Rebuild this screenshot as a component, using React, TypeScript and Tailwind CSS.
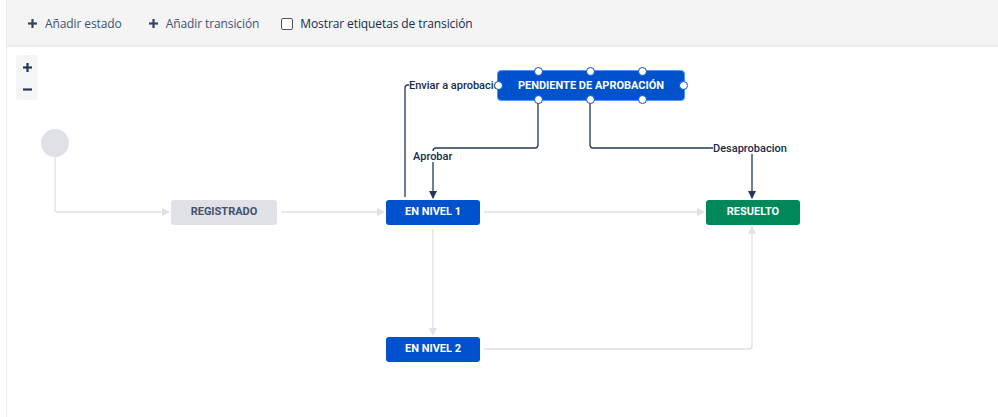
import React from 'react'

const ui = { fontFamily: '"Open Sans", "Noto Sans", sans-serif' }
const rb = { fontFamily: 'Roboto, "Liberation Sans", sans-serif' }

interface NodeProps {
  label: string
  x: number
  y: number
  w: number
  h: number
  className: string
}

function StatusNode({ label, x, y, w, h, className }: NodeProps) {
  return (
    <div
      className={`absolute flex items-center justify-center rounded-[3px] text-[11px] font-bold ${className}`}
      style={{ left: x, top: y, width: w, height: h, ...rb }}
    >
      {label}
    </div>
  )
}

function Handle({ x, y }: { x: number; y: number }) {
  return (
    <div
      className="absolute w-[9px] h-[9px] rounded-full bg-white border-[1.5px] border-[#0052cc]"
      style={{ left: x - 4.5, top: y - 4.5 }}
    />
  )
}

function EdgeLabel({ text, x, y }: { text: string; x: number; y: number }) {
  return (
    <div
      className="absolute text-[11px] font-medium leading-none text-[#172b4d] bg-white whitespace-nowrap"
      style={{ left: x, top: y, ...rb }}
    >
      {text}
    </div>
  )
}

function PlusIcon({ size = 9, minus = false }: { size?: number; minus?: boolean }) {
  const m = size / 2
  return (
    <svg width={size} height={size} viewBox={`0 0 ${size} ${size}`} className="shrink-0">
      <path d={`M0,${m} L${size},${m}`} stroke="currentColor" strokeWidth="2.2" />
      {!minus && <path d={`M${m},0 L${m},${size}`} stroke="currentColor" strokeWidth="2.2" />}
    </svg>
  )
}

function ToolButton({ label }: { label: string }) {
  return (
    <button className="flex items-center gap-[8px] text-[#42526e] text-[12px] tracking-[-0.1px]">
      <span className="text-[#344563] flex"><PlusIcon /></span>
      {label}
    </button>
  )
}

export default function App() {
  const light = '#dfe1e6'
  const dark = '#253858'

  return (
    <div className="w-[998px] h-[417px] bg-white overflow-hidden pl-[6px]">
      <div className="h-full border-l border-[#ebecf0] flex flex-col">
        <div className="h-[47px] bg-[#f4f4f4] border-b-2 border-[#ebebeb] flex items-center gap-[27px] pl-[21px] pt-[2px]" style={ui}>
          <ToolButton label="Añadir estado" />
          <ToolButton label="Añadir transición" />
          <label className="flex items-center gap-[7px] text-[12px] tracking-[-0.1px] text-[#172b4d] -ml-[5px]">
            <span className="w-[12px] h-[12px] border border-[#555] rounded-[2px] bg-white" />
            Mostrar etiquetas de transición
          </label>
        </div>

        <div className="relative flex-1">
          <div className="absolute left-[9px] top-[8px] w-[22px] h-[45px] bg-[#f4f5f7] rounded-[3px] flex flex-col items-center text-[#253858] pt-[1px]">
            <span className="h-[22px] flex items-center"><PlusIcon size={9} /></span>
            <span className="h-[22px] flex items-center"><PlusIcon size={9} minus /></span>
          </div>

          {/* edges, canvas coords = page coords, svg shifted back by canvas origin */}
          <svg className="absolute left-[-7px] top-[-47px]" width="998" height="417">
            <defs>
              <marker id="al" markerWidth="8" markerHeight="8" refX="7" refY="4" orient="auto" markerUnits="userSpaceOnUse">
                <path d="M0,0 L8,4 L0,8 z" fill={light} />
              </marker>
              <marker id="ad" markerWidth="8" markerHeight="8" refX="7" refY="4" orient="auto" markerUnits="userSpaceOnUse">
                <path d="M0,0 L8,4 L0,8 z" fill={dark} />
              </marker>
            </defs>
            <g fill="none" strokeWidth="1.3">
              <path d="M55,157 L55,209 Q55,212 58,212 L169,212" stroke={light} markerEnd="url(#al)" />
              <path d="M281,212 L384,212" stroke={light} markerEnd="url(#al)" />
              <path d="M484,212 L704,212" stroke={light} markerEnd="url(#al)" />
              <path d="M433,229 L433,335" stroke={light} markerEnd="url(#al)" />
              <path d="M484,349 L749,349 Q752,349 752,346 L752,227" stroke={light} markerEnd="url(#al)" />
              <path d="M405,197 L405,88 Q405,85 408,85 L496,85" stroke={dark} />
              <path d="M538,100 L538,145 Q538,148 535,148 L436,148 Q433,148 433,151 L433,198" stroke={dark} markerEnd="url(#ad)" />
              <path d="M590,100 L590,145 Q590,148 593,148 L749,148 Q752,148 752,151 L752,198" stroke={dark} markerEnd="url(#ad)" />
            </g>
            <circle cx="55" cy="143" r="14" fill="#dfe1e6" />
          </svg>

          <StatusNode label="REGISTRADO" x={164} y={153} w={106} h={25} className="bg-[#dfe1e6] text-[#42526e]" />
          <StatusNode label="EN NIVEL 1" x={379} y={153} w={94} h={25} className="bg-[#0052cc] text-white" />
          <StatusNode label="RESUELTO" x={699} y={153} w={94} h={25} className="bg-[#00875a] text-white" />
          <StatusNode label="EN NIVEL 2" x={379} y={290} w={94} h={25} className="bg-[#0052cc] text-white" />

          <EdgeLabel text="Enviar a aprobacio" x={402} y={33} />
          <EdgeLabel text="Aprobar" x={406} y={104} />
          <EdgeLabel text="Desaprobacion" x={706} y={96} />

          <div className="absolute left-[490px] top-[23px] w-[188px] h-[31px] rounded-[4px] border-[1.5px] border-[#4c9aff] bg-[#0052cc] flex items-center justify-center">
            <span className="text-[11px] font-bold text-white pt-[1px]" style={rb}>PENDIENTE DE APROBACIÓN</span>
          </div>
          <Handle x={531} y={24} />
          <Handle x={583} y={24} />
          <Handle x={635} y={24} />
          <Handle x={531} y={52} />
          <Handle x={583} y={52} />
          <Handle x={635} y={52} />
          <Handle x={491} y={38} />
          <Handle x={676} y={38} />
        </div>
      </div>
    </div>
  )
}
